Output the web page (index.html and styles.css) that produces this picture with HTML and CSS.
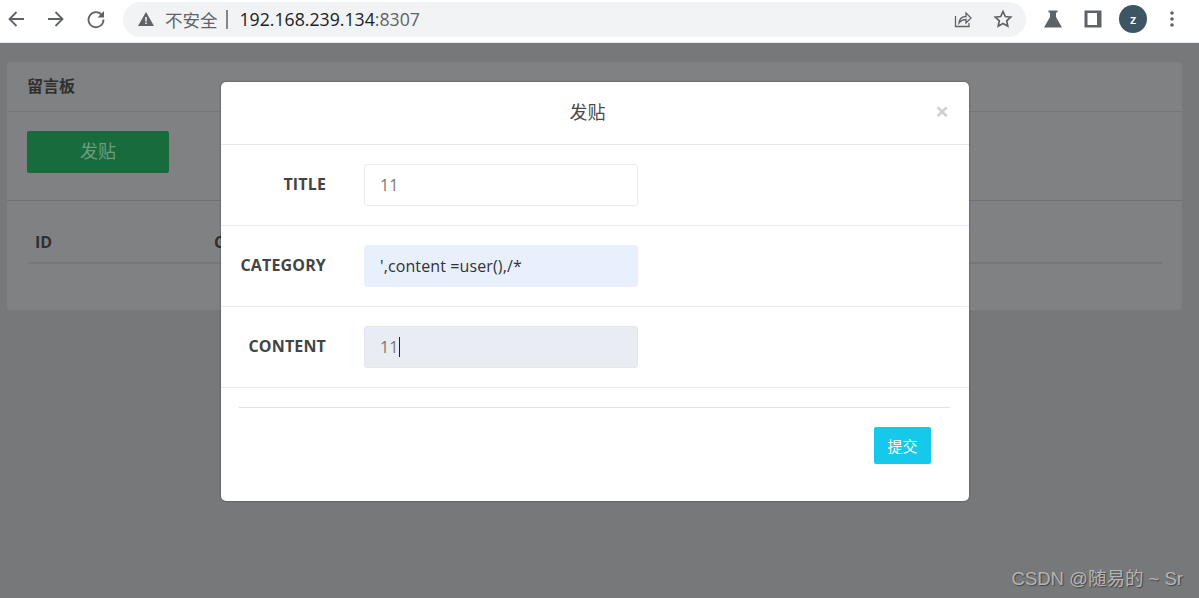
FILE: index.html
```html
<!DOCTYPE html>
<html lang="zh">
<head>
<meta charset="utf-8">
<title>留言板</title>
<link rel="stylesheet" href="styles.css">
</head>
<body>
<div class="toolbar">
  <div class="nav">
    <svg class="ico" viewBox="0 0 20 20"><path d="M18 10H4M10.500 3 3.500 10l7 7" fill="none" stroke="#5f6368" stroke-width="1.800"/></svg>
    <svg class="ico" viewBox="0 0 20 20"><path d="M2 10h14M9.500 3l7 7-7 7" fill="none" stroke="#5f6368" stroke-width="1.800"/></svg>
    <svg class="ico" viewBox="0 0 20 20"><path d="M16 6.200A7.500 7.500 0 1 0 17.500 10.500" fill="none" stroke="#5f6368" stroke-width="1.800"/><path d="M18 2v6.500h-6.500z" fill="#5f6368"/></svg>
  </div>
  <div class="omnibox">
    <svg class="warn" viewBox="0 0 16 14"><path d="M8 0 16 14H0zM7.200 5v4.500h1.600V5zm0 5.500V12h1.600v-1.500z" fill="#5f6368" fill-rule="evenodd"/></svg>
    <span class="insecure">不安全</span>
    <span class="sep"></span>
    <span class="url"><span class="host">192.168.239.134</span>:8307</span>
    <span class="omni-actions">
      <svg class="ico" viewBox="0 0 20 20"><path d="M2.500 7v10.500H16V14M6 14c.5-4 3-6.500 7-6.500V4l5 5-5 5v-3.500c-3 0-5 1-7 3.500z" fill="none" stroke="#5f6368" stroke-width="1.300"/></svg>
      <svg class="ico" viewBox="0 0 20 20"><path d="m10 2.500 2.300 5 5.400.6-4 3.700 1.100 5.400-4.800-2.700-4.800 2.700 1.100-5.400-4-3.700 5.400-.6z" fill="none" stroke="#5f6368" stroke-width="1.700"/></svg>
    </span>
  </div>
  <div class="tools">
    <svg class="ico" viewBox="0 0 20 20"><path d="M5.500 1.500h9v2H13v4.500l6 10.500H1L7 8V3.500H5.500z" fill="#5f6368"/></svg>
    <svg class="ico" viewBox="0 0 20 20"><path d="M1.500 1.500h17v17h-17zM4.500 4v12h9.500V4z" fill="#5f6368" fill-rule="evenodd"/></svg>
    <span class="avatar">z</span>
    <svg class="ico" viewBox="0 0 20 20"><circle cx="10" cy="4" r="1.800" fill="#5f6368"/><circle cx="10" cy="10" r="1.800" fill="#5f6368"/><circle cx="10" cy="16" r="1.800" fill="#5f6368"/></svg>
  </div>
</div>

<main class="page">
  <section class="card">
    <h1 class="card-title">留言板</h1>
    <div class="card-action"><button class="post-btn" type="button">发贴</button></div>
    <div class="table-wrap">
      <div class="table-head"><span class="col-id">ID</span><span>CATEGORY</span></div>
    </div>
  </section>

  <div class="modal">
    <div class="modal-head"><span>发贴</span><span class="close">×</span></div>
    <div class="row"><label class="lbl">TITLE</label><div class="field">11</div></div>
    <div class="row"><label class="lbl">CATEGORY</label><div class="field field-auto">',content =user(),/*</div></div>
    <div class="row"><label class="lbl">CONTENT</label><div class="field field-focus">11<span class="caret"></span></div></div>
    <div class="modal-foot"><button class="submit" type="button">提交</button></div>
  </div>
  <div class="watermark">CSDN @随易的 ~ Sr</div>
</main>
</body>
</html>
```

FILE: styles.css
```css
* { box-sizing: border-box; }
html, body { margin: 0; height: 100%; overflow: hidden; }
body { font-family: "Open Sans", "Noto Sans CJK SC", sans-serif; background: #77787a; }

.toolbar { height: 43px; background: #fff; display: flex; align-items: center; padding-bottom: 4px; border-bottom: 1px solid #e8e8e8; }
.nav { display: flex; gap: 20px; padding-left: 6px; width: 123px; }
.ico { width: 20px; height: 20px; flex: none; }
.omnibox { width: 903px; height: 35px; border-radius: 18px; background: #f1f3f4; display: flex; align-items: center; padding-left: 15px; }
.warn { width: 16px; height: 14px; margin-right: 11px; }
.insecure { font: 17.5px "Noto Sans CJK SC", sans-serif; color: #5f6368; }
.sep { width: 2px; height: 19px; background: #80868b; margin: 0 12px 0 8px; }
.url { font: 17.7px "Open Sans", sans-serif; color: #5f6368; }
.host { color: #202124; }
.omni-actions { margin-left: auto; display: flex; gap: 20px; padding-right: 13px; }
.tools { display: flex; align-items: center; padding-left: 17px; }
.tools .ico:nth-child(2) { margin-left: 20px; }
.avatar { width: 28px; height: 28px; margin: 0 17px 0 16px; border-radius: 50%; background: #3e5564; color: #fff; font: 600 13px "Open Sans", sans-serif; display: flex; align-items: center; justify-content: center; }
.tools .ico:last-child { margin-left: -2px; }

.page { position: relative; height: 555px; padding: 19px 17px 0 7px; }
.card { height: 248px; background: #808182; border-radius: 3px; }
.card-title { margin: 0; height: 50px; padding: 0 20px; font: 700 16px/46px "Noto Sans CJK SC", sans-serif; color: #2f2f2f; border-bottom: 1px solid #75767b; }
.card-action { height: 89px; padding: 19px 20px 0; border-bottom: 1px solid #6f7078; }
.post-btn { width: 142px; height: 42px; border: 0; border-radius: 2px; background: #176b3d; color: #6f9b80; font: 18px/36px "Noto Sans CJK SC", sans-serif; padding: 0 0 5px; }
.table-wrap { padding: 20px 20px 0 21px; }
.table-head { height: 43px; display: flex; align-items: center; border-bottom: 2px solid #76777a; font: 700 16px "Open Sans", sans-serif; color: #2f2f2f; padding-left: 7px; }
.col-id { width: 179px; }

.modal { position: absolute; left: 221px; top: 39px; width: 748px; height: 419px; background: #fff; border-radius: 5px; box-shadow: 0 0 2px rgba(0,0,0,.5); overflow: hidden; }
.modal-head { position: relative; height: 63px; display: flex; align-items: center; justify-content: center; border-bottom: 1px solid #e7e7ee; font: 18px "Noto Sans CJK SC", sans-serif; color: #4a4a4a; padding: 0 15px 4px 0; }
.close { position: absolute; right: 20px; top: 12px; font: 700 24px "Open Sans", sans-serif; color: #cfcfcf; }
.row { height: 81px; display: flex; align-items: center; gap: 38px; border-bottom: 1px solid #e9e9f0; padding-bottom: 1px; }
.lbl { width: 105px; text-align: right; font: 700 16px/20px "Open Sans", sans-serif; letter-spacing: .15px; color: #444; padding-bottom: 2px; }
.field { width: 274px; height: 42px; border: 1px solid #e9ecef; border-radius: 3px; padding: 0 15px; font: 16px/40px "Open Sans", sans-serif; letter-spacing: .12px; color: #777; }
.field-auto { background: #e8f0fe; color: #333; border-color: #e8f0fe; }
.field-focus { background: #e9ecf2; border-color: #e3e6ea; }
.caret { display: inline-block; width: 1px; height: 20px; background: #222; vertical-align: -4px; }
.modal-foot { margin: 19px 19px 0 18px; border-top: 1px solid #e2e2e2; padding: 19px 19px 0 0; display: flex; justify-content: flex-end; }
.submit { width: 57px; height: 37px; border: 0; border-radius: 2px; background: #16c8ea; color: #fff; font: 15px "Noto Sans CJK SC", sans-serif; padding: 0 0 1px; }
.watermark { position: absolute; right: 16px; bottom: 8px; font: 18.5px "Liberation Sans", "Noto Sans CJK SC", sans-serif; color: #b4b4b4; text-shadow: 1px 1px 1px #444; }
```
